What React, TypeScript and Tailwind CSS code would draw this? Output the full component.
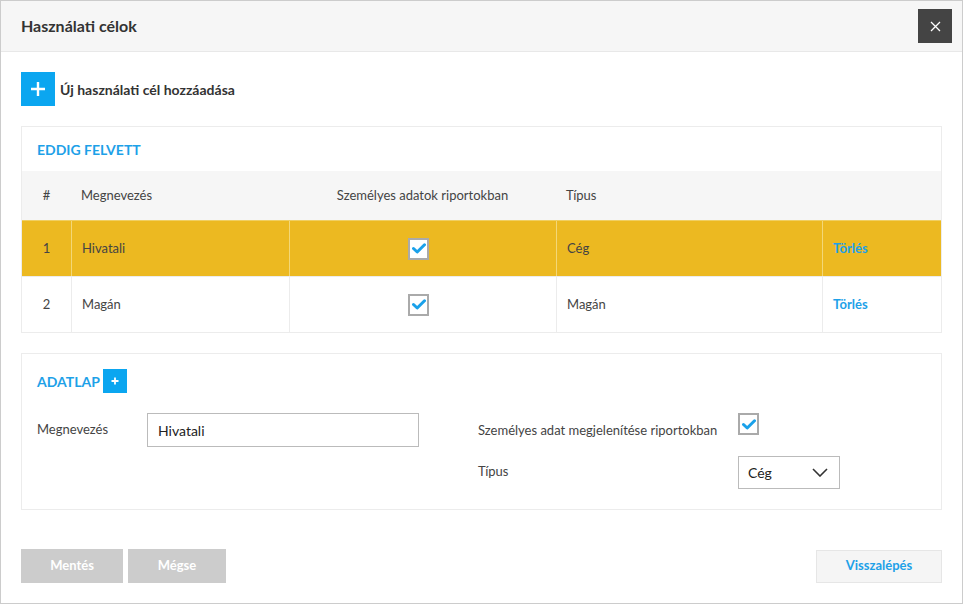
import React from 'react';

const font = { fontFamily: 'Lato, "Open Sans", Arial, sans-serif' };

function Check() {
  return (
    <svg width="14" height="11" viewBox="0 0 14 11" className="block">
      <polyline points="1.5,5.5 5.2,9 12.5,1.8" fill="none" stroke="#1aa1ea" strokeWidth="3" strokeLinecap="round" strokeLinejoin="round" />
    </svg>
  );
}

function CheckBox() {
  return (
    <div className="w-[21px] h-[22px] border-2 border-[#aaaaaa] bg-white flex items-center justify-center shrink-0">
      <Check />
    </div>
  );
}

const rows = [
  { n: 1, name: 'Hivatali', type: 'Cég', active: true },
  { n: 2, name: 'Magán', type: 'Magán', active: false },
];

export default function App() {
  return (
    <div style={font} className="w-[963px] h-[604px] border border-[#cccccc] bg-white flex flex-col text-[13px] text-[#444]">
      {/* Header */}
      <div className="h-[51px] shrink-0 bg-[#f6f6f6] border-b border-[#e8e8e8] flex items-center justify-between pl-[20px] pr-[10px]">
        <h1 className="text-[16px] font-bold text-[#333]">Használati célok</h1>
        <button className="w-[34px] h-[34px] bg-[#444444] flex items-center justify-center">
          <svg width="11" height="11" viewBox="0 0 11 11">
            <path d="M1 1L10 10M10 1L1 10" stroke="#fff" strokeWidth="1.3" />
          </svg>
        </button>
      </div>

      {/* Body */}
      <div className="flex-1 flex flex-col px-[20px] pt-[20px] pb-[20px]">
        <div className="flex items-center gap-[5px]">
          <button className="w-[34px] h-[34px] bg-[#0ba6f0] flex items-center justify-center">
            <svg width="16" height="16" viewBox="0 0 16 16">
              <path d="M8 1V15M1 8H15" stroke="#fff" strokeWidth="2.4" />
            </svg>
          </button>
          <span className="text-[14px] font-bold text-[#333]">Új használati cél hozzáadása</span>
        </div>

        {/* Eddig felvett */}
        <div className="mt-[20px] border border-[#ececec]">
          <div className="h-[44px] flex items-center px-[15px]">
            <span className="text-[14px] font-bold text-[#1da1e8]">EDDIG FELVETT</span>
          </div>
          <div className="grid grid-cols-[49px_218px_267px_266px_1fr] h-[49px] bg-[#f6f6f6] items-center">
            <div className="text-center">#</div>
            <div className="pl-[10px]">Megnevezés</div>
            <div className="text-center">Személyes adatok riportokban</div>
            <div className="pl-[10px]">Típus</div>
            <div></div>
          </div>
          {rows.map((r) => (
            <div
              key={r.n}
              className={
                'grid grid-cols-[49px_218px_267px_266px_1fr] h-[56px] border-t ' +
                (r.active ? 'bg-[#ecb921] border-[#f0cf62]' : 'bg-white border-[#ececec]')
              }
            >
              <div className="flex items-center justify-center">{r.n}</div>
              <div className={'flex items-center pl-[10px] border-l ' + (r.active ? 'border-[#f3d777]' : 'border-[#ececec]')}>{r.name}</div>
              <div className={'flex items-center justify-center border-l ' + (r.active ? 'border-[#f3d777]' : 'border-[#ececec]')}>
                <div className="mr-[9px]">
                  <CheckBox />
                </div>
              </div>
              <div className={'flex items-center pl-[10px] border-l ' + (r.active ? 'border-[#f3d777]' : 'border-[#ececec]')}>{r.type}</div>
              <div className={'flex items-center pl-[10px] border-l ' + (r.active ? 'border-[#f3d777]' : 'border-[#ececec]')}>
                <span className="text-[13px] font-bold text-[#1da1e8]">Törlés</span>
              </div>
            </div>
          ))}
        </div>

        {/* Adatlap */}
        <div className="mt-[20px] border border-[#ececec] px-[15px] pt-[15px] pb-[20px]">
          <div className="flex items-center gap-[3px] h-[24px]">
            <span className="text-[14px] font-bold text-[#1da1e8]">ADATLAP</span>
            <button className="w-[24px] h-[24px] bg-[#0ba6f0] flex items-center justify-center">
              <svg width="8" height="8" viewBox="0 0 8 8">
                <path d="M4 0.5V7.5M0.5 4H7.5" stroke="#fff" strokeWidth="1.8" />
              </svg>
            </button>
          </div>
          <div className="mt-[20px] grid grid-cols-[441px_1fr]">
            <div className="flex items-start">
              <span className="w-[110px] pt-[7px]">Megnevezés</span>
              <div className="w-[272px] h-[34px] border border-[#bbbbbb] flex items-center px-[10px] text-[14px] text-[#222]">Hivatali</div>
            </div>
            <div className="flex flex-col gap-[21px]">
              <div className="flex items-start h-[22px]">
                <span className="w-[260px] pt-[9px] leading-[16px]">Személyes adat megjelenítése riportokban</span>
                <CheckBox />
              </div>
              <div className="flex items-center">
                <span className="w-[260px] pb-[2px]">Típus</span>
                <div className="w-[102px] h-[33px] border border-[#bbbbbb] flex items-center justify-between pl-[9px] pr-[11px] text-[14px] text-[#222]">
                  <span>Cég</span>
                  <svg width="16" height="9" viewBox="0 0 16 9">
                    <polyline points="1,1 8,8 15,1" fill="none" stroke="#333" strokeWidth="1.6" />
                  </svg>
                </div>
              </div>
            </div>
          </div>
        </div>

        {/* Footer */}
        <div className="mt-auto flex items-center justify-between">
          <div className="flex gap-[5px]">
            <button className="w-[102px] h-[34px] bg-[#cccccc] text-white font-bold text-[13px]">Mentés</button>
            <button className="w-[98px] h-[34px] bg-[#cccccc] text-white font-bold text-[13px]">Mégse</button>
          </div>
          <button className="w-[126px] h-[33px] bg-[#f5f5f5] border border-[#e6e6e6] text-[#1da1e8] font-bold text-[13px]">Visszalépés</button>
        </div>
      </div>
    </div>
  );
}
